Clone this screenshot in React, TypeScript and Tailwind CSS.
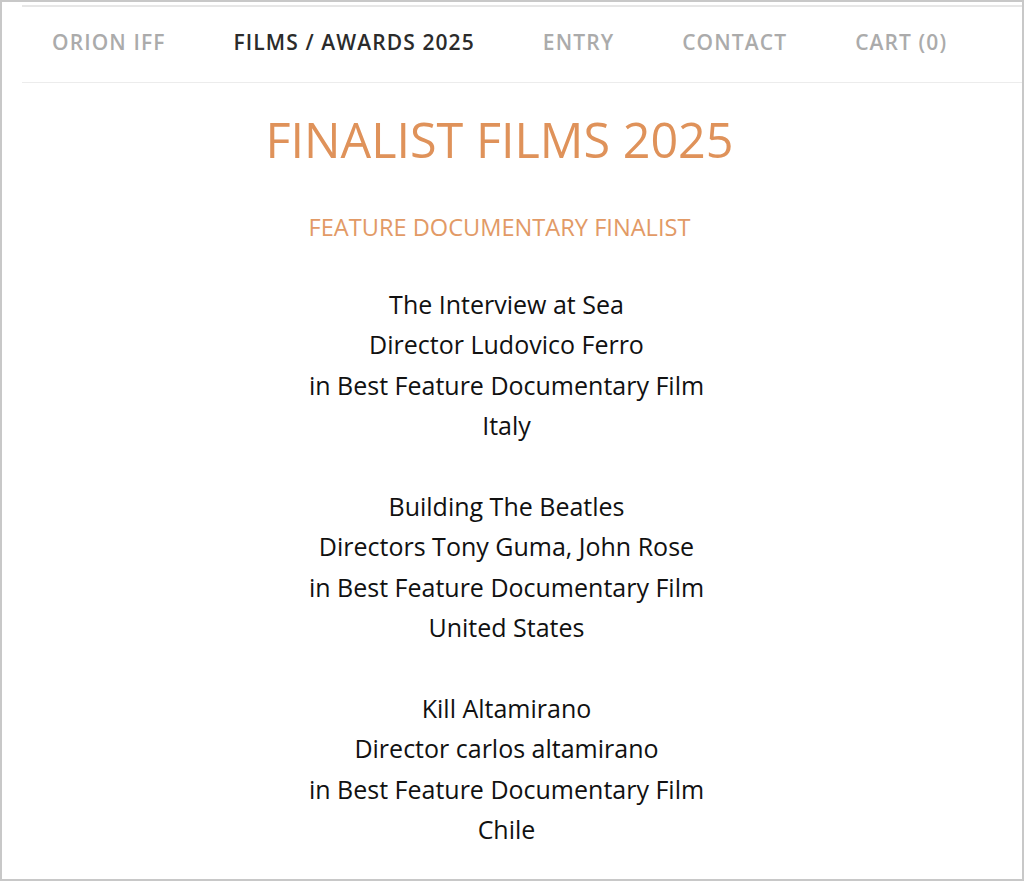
const navItems = [
  { label: 'ORION IFF', active: false },
  { label: 'FILMS / AWARDS 2025', active: true },
  { label: 'ENTRY', active: false },
  { label: 'CONTACT', active: false },
  { label: 'CART (0)', active: false },
];

const films = [
  {
    title: 'The Interview at Sea',
    director: 'Director Ludovico Ferro',
    category: 'in Best Feature Documentary Film',
    country: 'Italy',
  },
  {
    title: 'Building The Beatles',
    director: 'Directors Tony Guma, John Rose',
    category: 'in Best Feature Documentary Film',
    country: 'United States',
  },
  {
    title: 'Kill Altamirano',
    director: 'Director carlos altamirano',
    category: 'in Best Feature Documentary Film',
    country: 'Chile',
  },
];

const Nav = () => (
  <nav className="h-[76px] flex items-center pl-[30px] pb-[4px] gap-[68px] border-b border-[#ececec]">
    {navItems.map((item) => (
      <a
        key={item.label}
        className={`text-[21px] font-semibold tracking-[1.1px] leading-none whitespace-nowrap ${
          item.active ? 'text-[#2b2b2b]' : 'text-[#ababab]'
        }`}
      >
        {item.label}
      </a>
    ))}
  </nav>
);

export default function App() {
  return (
    <div
      className="w-[1024px] h-[881px] border-2 border-[#c8c8c8] bg-white overflow-hidden"
      style={{ fontFamily: '"Open Sans", "Noto Sans", sans-serif' }}
    >
      <div className="pl-[20px] pt-[3px]">
        <div className="border-t-2 border-[#e6e6e6]">
          <Nav />
        </div>
      </div>
      <main className="pr-[11px] text-center">
        <div className="pr-[14px]">
          <h1 className="mt-[31px] text-[48.5px] leading-[50px] font-normal text-[#df925a]">
            FINALIST FILMS 2025
          </h1>
          <h2 className="mt-[51px] text-[23.6px] leading-[24px] font-normal text-[#e29a66]">
            FEATURE DOCUMENTARY FINALIST
          </h2>
        </div>
        <div className="mt-[45px] flex flex-col gap-[40.4px] text-[25px] leading-[40.4px] text-[#111111]">
          {films.map((film) => (
            <p key={film.title}>
              {film.title}
              <br />
              {film.director}
              <br />
              {film.category}
              <br />
              {film.country}
            </p>
          ))}
        </div>
      </main>
    </div>
  );
}
